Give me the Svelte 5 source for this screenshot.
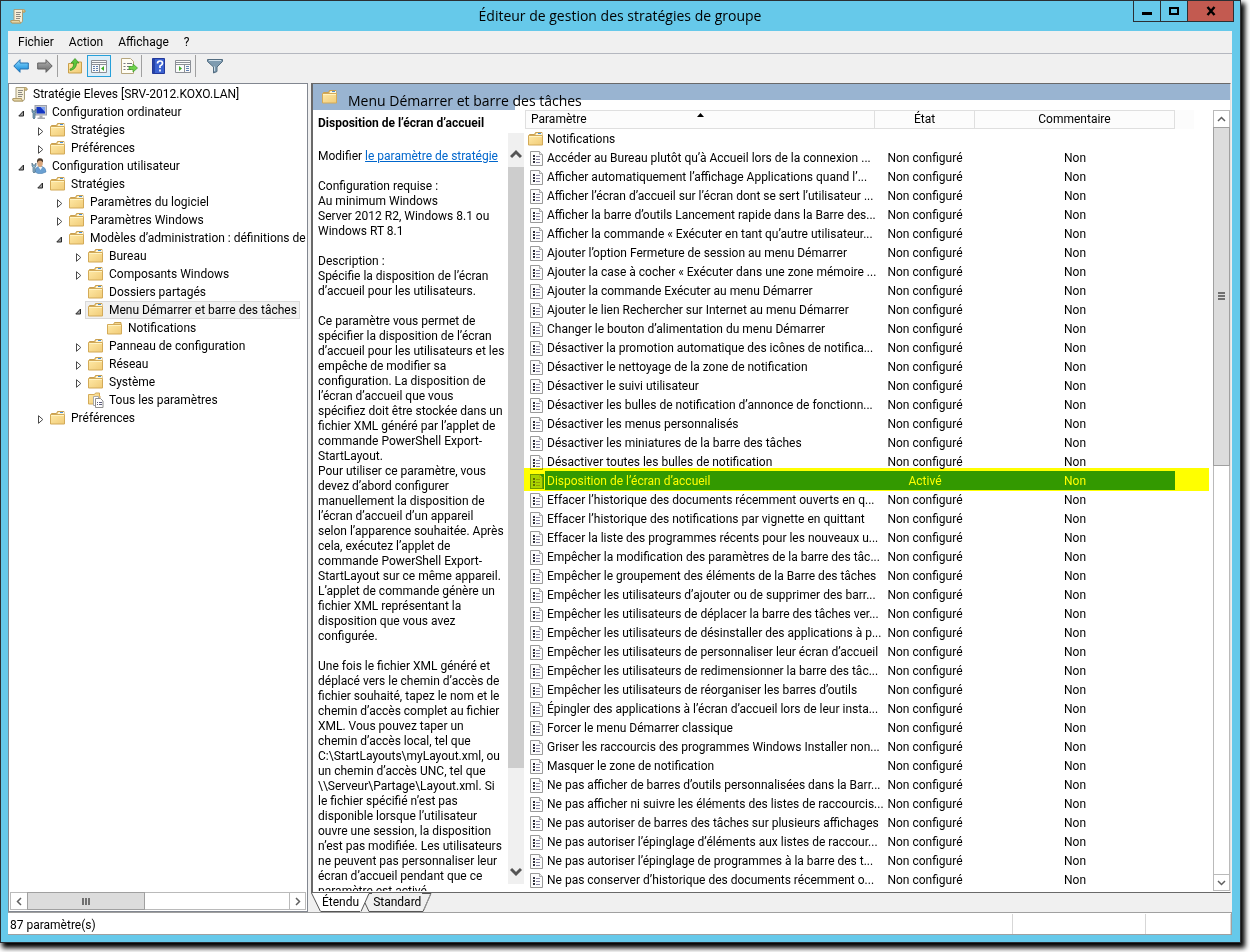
<script lang="ts">
  type Node = {
    label: string;
    depth: number;
    icon: "scroll" | "computer" | "user" | "folder" | "plain" | "all";
    open?: boolean;
    selected?: boolean;
  };

  const TREE: Node[] = [
    { label: "Stratégie Eleves [SRV-2012.KOXO.LAN]", depth: 0, icon: "scroll" },
    { label: "Configuration ordinateur", depth: 1, icon: "computer", open: true },
    { label: "Stratégies", depth: 2, icon: "folder", open: false },
    { label: "Préférences", depth: 2, icon: "folder", open: false },
    { label: "Configuration utilisateur", depth: 1, icon: "user", open: true },
    { label: "Stratégies", depth: 2, icon: "folder", open: true },
    { label: "Paramètres du logiciel", depth: 3, icon: "folder", open: false },
    { label: "Paramètres Windows", depth: 3, icon: "folder", open: false },
    { label: "Modèles d’administration : définitions de", depth: 3, icon: "folder", open: true },
    { label: "Bureau", depth: 4, icon: "folder", open: false },
    { label: "Composants Windows", depth: 4, icon: "folder", open: false },
    { label: "Dossiers partagés", depth: 4, icon: "folder" },
    { label: "Menu Démarrer et barre des tâches", depth: 4, icon: "folder", open: true, selected: true },
    { label: "Notifications", depth: 5, icon: "plain" },
    { label: "Panneau de configuration", depth: 4, icon: "folder", open: false },
    { label: "Réseau", depth: 4, icon: "folder", open: false },
    { label: "Système", depth: 4, icon: "folder", open: false },
    { label: "Tous les paramètres", depth: 4, icon: "all" },
    { label: "Préférences", depth: 2, icon: "folder", open: false },
  ];

  const SETTINGS = [
    "Accéder au Bureau plutôt qu’à Accueil lors de la connexion ...",
    "Afficher automatiquement l’affichage Applications quand l’...",
    "Afficher l’écran d’accueil sur l’écran dont se sert l’utilisateur ...",
    "Afficher la barre d’outils Lancement rapide dans la Barre des...",
    "Afficher la commande « Exécuter en tant qu’autre utilisateur...",
    "Ajouter l’option Fermeture de session au menu Démarrer",
    "Ajouter la case à cocher « Exécuter dans une zone mémoire ...",
    "Ajouter la commande Exécuter au menu Démarrer",
    "Ajouter le lien Rechercher sur Internet au menu Démarrer",
    "Changer le bouton d’alimentation du menu Démarrer",
    "Désactiver la promotion automatique des icônes de notifica...",
    "Désactiver le nettoyage de la zone de notification",
    "Désactiver le suivi utilisateur",
    "Désactiver les bulles de notification d’annonce de fonctionn...",
    "Désactiver les menus personnalisés",
    "Désactiver les miniatures de la barre des tâches",
    "Désactiver toutes les bulles de notification",
    "Disposition de l’écran d’accueil",
    "Effacer l’historique des documents récemment ouverts en q...",
    "Effacer l’historique des notifications par vignette en quittant",
    "Effacer la liste des programmes récents pour les nouveaux u...",
    "Empêcher la modification des paramètres de la barre des tâc...",
    "Empêcher le groupement des éléments de la Barre des tâches",
    "Empêcher les utilisateurs d’ajouter ou de supprimer des barr...",
    "Empêcher les utilisateurs de déplacer la barre des tâches ver...",
    "Empêcher les utilisateurs de désinstaller des applications à p...",
    "Empêcher les utilisateurs de personnaliser leur écran d’accueil",
    "Empêcher les utilisateurs de redimensionner la barre des tâc...",
    "Empêcher les utilisateurs de réorganiser les barres d’outils",
    "Épingler des applications à l’écran d’accueil lors de leur insta...",
    "Forcer le menu Démarrer classique",
    "Griser les raccourcis des programmes Windows Installer non...",
    "Masquer le zone de notification",
    "Ne pas afficher de barres d’outils personnalisées dans la Barr...",
    "Ne pas afficher ni suivre les éléments des listes de raccourcis...",
    "Ne pas autoriser de barres des tâches sur plusieurs affichages",
    "Ne pas autoriser l’épinglage d’éléments aux listes de raccour...",
    "Ne pas autoriser l’épinglage de programmes à la barre des t...",
    "Ne pas conserver d’historique des documents récemment o...",
  ];

  const REQUIREMENTS = `Configuration requise :
Au minimum Windows
Server 2012 R2, Windows 8.1 ou
Windows RT 8.1`;

  const DESCRIPTION = [
    `Description :
Spécifie la disposition de l’écran
d’accueil pour les utilisateurs.`,
    `Ce paramètre vous permet de
spécifier la disposition de l’écran
d’accueil pour les utilisateurs et les
empêche de modifier sa
configuration. La disposition de
l’écran d’accueil que vous
spécifiez doit être stockée dans un
fichier XML généré par l’applet de
commande PowerShell Export-
StartLayout.
Pour utiliser ce paramètre, vous
devez d’abord configurer
manuellement la disposition de
l’écran d’accueil d’un appareil
selon l’apparence souhaitée. Après
cela, exécutez l’applet de
commande PowerShell Export-
StartLayout sur ce même appareil.
L’applet de commande génère un
fichier XML représentant la
disposition que vous avez
configurée.`,
    `Une fois le fichier XML généré et
déplacé vers le chemin d’accès de
fichier souhaité, tapez le nom et le
chemin d’accès complet au fichier
XML. Vous pouvez taper un
chemin d’accès local, tel que
C:\\StartLayouts\\myLayout.xml, ou
un chemin d’accès UNC, tel que
\\\\Serveur\\Partage\\Layout.xml. Si
le fichier spécifié n’est pas
disponible lorsque l’utilisateur
ouvre une session, la disposition
n’est pas modifiée. Les utilisateurs
ne peuvent pas personnaliser leur
écran d’accueil pendant que ce
paramètre est activé.`,
  ];

  let selected = $state("Disposition de l’écran d’accueil");
</script>

{#snippet folder()}
  <svg width="16" height="16" viewBox="0 0 16 16" aria-hidden="true">
    <path d="M1.500 3.500h5l1-2h6.500v3h-12.500z" fill="#e9c46f" stroke="#c9a050" />
    <path d="M8.500 2h5.500v2H7.500z" fill="#fff6d8" />
    <rect x="10" y="2" width="3" height="1" fill="#4a90d8" />
    <path d="M.5 4.500h14v9.500H.5z" fill="url(#folder-fill)" stroke="#d3aa58" />
    <path d="M1 5.500h13" stroke="#fff3c2" />
  </svg>
{/snippet}

{#snippet plainFolder()}
  <svg width="16" height="16" viewBox="0 0 16 16" aria-hidden="true">
    <path d="M1.500 4.500h5l1-2h6.500v2h-12.500z" fill="#f4d78e" stroke="#c9a050" />
    <path d="M.5 4.500h14v9.500H.5z" fill="url(#folder-fill)" stroke="#d3aa58" />
    <path d="M1 5.500h13" stroke="#fff3c2" />
  </svg>
{/snippet}

{#snippet scroll()}
  <svg width="16" height="16" viewBox="0 0 16 16" aria-hidden="true">
    <path d="M4 1.500h9.500q2 .5 1.500 2.500h-2.500v9q-.5 2-2 2h-9q-1.500-1-.5-2.500h3z" fill="#f6efd8" stroke="#a99f7c" />
    <path d="M12.500 4q-.5-2 1-2.500q2 .5 1.500 2.500z" fill="#d9c58d" stroke="#b89f62" />
    <path d="M1 12.500h8.500q0 2 1.500 2.500H2q-1.500-1-1-2.500z" fill="#e5d7a8" stroke="#b39d68" />
    <path d="M6 4.500h5M6 6.500h4M6 8.500h5M6 10.500h4" stroke="#8d8b83" />
  </svg>
{/snippet}

{#snippet computer()}
  <svg width="16" height="16" viewBox="0 0 16 16" aria-hidden="true">
    <rect x="4" y="1.500" width="11.500" height="9.500" fill="#c3c7cf" stroke="#9a9faa" />
    <rect x="5.500" y="3" width="8.500" height="6.500" fill="#1336c4" />
    <path d="M9.500 3H14v5z" fill="#7fa2f2" />
    <path d="M8.500 11.500h3v2h2.500v1.500H6.500v-1.500h2z" fill="#a7aab0" />
    <path d="M1 5v3l1 1.200v4.800l1 1 1-1V9.200L5 8V5L4 7H2z" fill="#7fa3ba" stroke="#48697f" stroke-width=".7" />
  </svg>
{/snippet}

{#snippet user()}
  <svg width="16" height="16" viewBox="0 0 16 16" aria-hidden="true">
    <path d="M4 14q0-5 4-5.500h3q4 1 4 5.500l-4 1.500H7z" fill="#6aa0d2" stroke="#4a7fb0" stroke-width=".6" />
    <path d="M7.500 9l2 3 2-3z" fill="#f1f5f8" />
    <ellipse cx="9" cy="5" rx="2.800" ry="4" fill="#d9a67c" />
    <path d="M6 5q-.5-5 3-4.700 3.500 0 3 4.200-1.500-2-3-2-2 0-3 2.500z" fill="#4b3a2c" />
    <path d="M1 5v3l1 1.200v4.800l1 1 1-1V9.200L5 8V5L4 7H2z" fill="#8fb6cc" stroke="#48697f" stroke-width=".7" />
  </svg>
{/snippet}

{#snippet allSettings()}
  <svg width="16" height="16" viewBox="0 0 16 16" aria-hidden="true">
    <path d="M.5 2.500h6l1-1.500h4v3h.5v8H.5z" fill="url(#folder-fill)" stroke="#d3aa58" />
    <path d="M5.500 4.500h5v9h-5z" fill="#fff" stroke="#aaa" />
    <path d="M7.500 6.500h5l2.500 2.500v6.500H7.500z" fill="#fff" stroke="#8e8e8e" />
    <path d="M9 10.500h1M11 10.500h3M9 12.500h1M11 12.500h3" stroke="#5b5b7a" />
  </svg>
{/snippet}

{#snippet policy()}
  <svg width="14" height="15" viewBox="0 0 14 15" aria-hidden="true">
    <path d="M.5.500h9L12.500 3.500v11H.5z" fill="#fcfcfc" stroke="#999" />
    <path d="M9.500.500v3H12.500" fill="#e8e8e8" stroke="#aaa" />
    <path d="M3 5h2M3 8h2M3 11h2" stroke="#2d2d3a" stroke-width="2" />
    <path d="M6 5.500h4M6 8.500h4M6 11.500h4" stroke="#8581a0" />
  </svg>
{/snippet}

{#snippet chevron(d: string)}
  <svg width="9" height="9" viewBox="0 0 9 9" aria-hidden="true">
    <path {d} fill="none" stroke="#606060" stroke-width="1.500" />
  </svg>
{/snippet}

<svg class="defs" width="0" height="0" aria-hidden="true">
  <defs>
    <linearGradient id="folder-fill" x1="0" y1="0" x2="1" y2="1">
      <stop offset="0" stop-color="#ffe9a6" />
      <stop offset="1" stop-color="#f0cb77" />
    </linearGradient>
    <linearGradient id="back-fill" x1="0" y1="0" x2="0" y2="1">
      <stop offset="0" stop-color="#8fdcff" />
      <stop offset="1" stop-color="#0a84d8" />
    </linearGradient>
    <linearGradient id="fwd-fill" x1="0" y1="0" x2="0" y2="1">
      <stop offset="0" stop-color="#b5b5b5" />
      <stop offset="1" stop-color="#686868" />
    </linearGradient>
  </defs>
</svg>

<div class="desktop">
  <main class="window">
    <header class="titlebar">
      <span class="app-icon">{@render scroll()}</span>
      <h1>Éditeur de gestion des stratégies de groupe</h1>
      <div class="caption-buttons">
        <button type="button" aria-label="Réduire">
          <svg width="10" height="10" viewBox="0 0 10 10"><path d="M0 7.500h10" stroke="#000" stroke-width="3" /></svg>
        </button>
        <button type="button" aria-label="Agrandir">
          <svg width="10" height="10" viewBox="0 0 10 10"><rect x="1" y="2" width="8" height="6" fill="none" stroke="#000" stroke-width="2" /></svg>
        </button>
        <button type="button" class="close" aria-label="Fermer">
          <svg width="10" height="10" viewBox="0 0 10 10"><path d="M1.500 1l7 8M8.500 1l-7 8" stroke="#000" stroke-width="2.400" /></svg>
        </button>
      </div>
    </header>

    <nav class="menubar">
      <button type="button">Fichier</button>
      <button type="button">Action</button>
      <button type="button">Affichage</button>
      <button type="button">?</button>
    </nav>

    <div class="toolbar" role="toolbar" aria-label="Outils">
      <button type="button" aria-label="Précédent">
        <svg width="16" height="14" viewBox="0 0 16 14"><path d="M.8 7L7 .700v3.300h8.300v6H7v3.300z" fill="url(#back-fill)" stroke="#2570b0" /></svg>
      </button>
      <button type="button" aria-label="Suivant">
        <svg width="16" height="14" viewBox="0 0 16 14"><path d="M15.200 7L9 .700v3.300H.7v6H9v3.300z" fill="url(#fwd-fill)" stroke="#606060" /></svg>
      </button>
      <span class="sep"></span>
      <button type="button" aria-label="Dossier parent">
        <svg width="16" height="16" viewBox="0 0 16 16">
          <path d="M1.500 5.500h5l1-1.500h7v11h-13z" fill="url(#folder-fill)" stroke="#c99f4a" />
          <path d="M3 11q4-1 3.500-6H4l4-4.500L12 5H9.500q0 6-6 7.500z" fill="#5cc63c" stroke="#348a1e" stroke-width=".7" />
        </svg>
      </button>
      <button type="button" class="active" aria-label="Arborescence">
        <svg width="17" height="15" viewBox="0 0 17 15">
          <path d="M.5 1.500h15v12H.5z" fill="#fafafa" stroke="#8b8f96" />
          <path d="M1 3.500h14M1 5.500h14M8.500 6v7" stroke="#8b8f96" />
          <path d="M2 7.500h2M5 7.500h2M2 9.500h2M5 9.500h2M2 11.500h2M5 11.500h2" stroke="#5f7fae" />
          <path d="M13 7v5L10 9.500z" fill="#3cae26" />
        </svg>
      </button>
      <button type="button" class="spaced" aria-label="Exporter la liste">
        <svg width="17" height="16" viewBox="0 0 17 16">
          <path d="M.5.500h9l3 3v12H.5z" fill="#fffdf3" stroke="#b6a67e" />
          <path d="M2.500 5.500h2M6 5.500h5M2.500 8.500h2M6 8.500h4M2.500 11.500h2M6 11.500h4" stroke="#77787e" />
          <path d="M8 8.500h4V6l4.500 4-4.500 4v-2.500H8z" fill="#6fd34b" stroke="#3d9a25" stroke-width=".7" />
        </svg>
      </button>
      <span class="sep"></span>
      <button type="button" aria-label="Aide">
        <svg width="14" height="16" viewBox="0 0 14 16">
          <path d="M.5.500h12v15H.5z" fill="#3a61d0" stroke="#23389a" />
          <path d="M1 1h2v14H1z" fill="#2543a6" />
          <path d="M5.500 5.500q0-2.500 2.500-2.500t2.500 2.200Q10.500 7 8 8v2M8 11.500v2" fill="none" stroke="#fff" stroke-width="1.700" />
        </svg>
      </button>
      <button type="button" aria-label="Volet d’actions">
        <svg width="17" height="15" viewBox="0 0 17 15">
          <path d="M.5 1.500h15v12H.5z" fill="#fafafa" stroke="#8b8f96" />
          <path d="M1 3.500h14M1 5.500h14M9.500 6v7" stroke="#8b8f96" />
          <path d="M11 7.500h3M11 9.500h3M11 11.500h3" stroke="#5f7fae" />
          <path d="M4 7v5l3-2.500z" fill="#3cae26" />
        </svg>
      </button>
      <span class="sep"></span>
      <button type="button" class="filter" aria-label="Filtrer">
        <svg width="16" height="16" viewBox="0 0 16 16">
          <path d="M.5 1.500h15v2L10 9v4.500L6.500 15V9L.5 3.500z" fill="#7e9bb0" stroke="#526c80" />
          <path d="M2 2.500h12" stroke="#cfdee8" />
          <path d="M7.500 8.500V13" stroke="#c6d8e3" />
        </svg>
      </button>
    </div>

    <div class="panes">
      <section class="tree-pane">
        <ul class="tree" role="tree" aria-label="Arborescence de la console">
          {#each TREE as node}
            <li role="treeitem" aria-selected={node.selected ?? false} style:padding-left="{node.depth * 19}px">
              {#if node.depth > 0}
                <span class="toggle">
                  {#if node.open === true}
                    <svg width="7" height="7" viewBox="0 0 7 7"><path d="M5.500 1v5H.8z" fill="#a0a0a0" stroke="#262626" /></svg>
                  {:else if node.open === false}
                    <svg width="6" height="9" viewBox="0 0 6 9"><path d="M.5.700v7.600L4.800 4.500z" fill="#fff" stroke="#4a4a4a" /></svg>
                  {/if}
                </span>
              {/if}
              <span class="node" class:selected={node.selected}>
                {#if node.icon === "scroll"}{@render scroll()}
                {:else if node.icon === "computer"}{@render computer()}
                {:else if node.icon === "user"}{@render user()}
                {:else if node.icon === "all"}{@render allSettings()}
                {:else if node.icon === "plain"}{@render plainFolder()}
                {:else}{@render folder()}
                {/if}
                <span>{node.label}</span>
              </span>
            </li>
          {/each}
        </ul>
        <div class="hscroll">
          <button type="button" aria-label="Défiler à gauche">{@render chevron("M6 1L2.500 4.500L6 8")}</button>
          <span class="hthumb"><i></i><i></i><i></i></span>
          <button type="button" class="end" aria-label="Défiler à droite">{@render chevron("M3 1l3.500 3.500L3 8")}</button>
        </div>
      </section>

      <section class="result-pane">
        <div class="result-view">
          <div class="banner">
            <h2>{@render folder()}<span>Menu Démarrer et barre des tâches</span></h2>
          </div>
          <div class="result-body">
            <article class="details">
              <h3>{selected}</h3>
              <div class="details-scroll">
                <div class="details-text">
                  <p>Modifier <a href="#policy">le paramètre de stratégie</a></p>
                  <p>{REQUIREMENTS}</p>
                  {#each DESCRIPTION as paragraph}
                    <p>{paragraph}</p>
                  {/each}
                </div>
                <div class="vscroll flat">
                  <button type="button" aria-label="Défiler vers le haut">
                    <svg width="12" height="10" viewBox="0 0 12 10"><path d="M1 8l5-5 5 5" fill="none" stroke="#555" stroke-width="3" /></svg>
                  </button>
                  <span class="vthumb"></span>
                  <button type="button" class="end" aria-label="Défiler vers le bas">
                    <svg width="12" height="10" viewBox="0 0 12 10"><path d="M1 2l5 5 5-5" fill="none" stroke="#555" stroke-width="3" /></svg>
                  </button>
                </div>
              </div>
            </article>

            <div class="list">
              <div class="list-scroll">
                <table>
                  <colgroup>
                    <col class="col-name" />
                    <col class="col-state" />
                    <col class="col-comment" />
                    <col />
                  </colgroup>
                  <thead>
                    <tr>
                      <th class="name" aria-sort="ascending">
                        Paramètre
                        <svg class="sort" width="7" height="4" viewBox="0 0 7 4"><path d="M0 4h7L3.500 0z" /></svg>
                      </th>
                      <th>État</th>
                      <th>Commentaire</th>
                      <td></td>
                    </tr>
                  </thead>
                  <tbody>
                    <tr>
                      <td class="name"><span class="row-icon">{@render folder()}</span><span class="text">Notifications</span></td>
                      <td></td>
                      <td></td>
                      <td></td>
                    </tr>
                    {#each SETTINGS as setting}
                      <tr class:selected={setting === selected} onclick={() => (selected = setting)}>
                        <td class="name"><span class="row-icon">{@render policy()}</span><span class="text">{setting}</span></td>
                        <td>{setting.startsWith("Disposition") ? "Activé" : "Non configuré"}</td>
                        <td>Non</td>
                        <td></td>
                      </tr>
                    {/each}
                  </tbody>
                </table>
              </div>
              <div class="vscroll">
                <button type="button" aria-label="Défiler vers le haut">{@render chevron("M1 6l3.500-3.500L8 6")}</button>
                <span class="vthumb"><i></i><i></i><i></i></span>
                <button type="button" class="end" aria-label="Défiler vers le bas">{@render chevron("M1 3l3.500 3.500L8 3")}</button>
              </div>
            </div>
          </div>
        </div>
        <div class="tabs" role="tablist">
          <svg width="10" height="19" viewBox="0 0 10 19"><path d="M0 0h10v18.500H9.500z" fill="#fff" /><path d="M.5 0l9 18.500" stroke="#555" /></svg>
          <button type="button" role="tab" class="current" aria-selected="true">Étendu</button>
          <svg width="12" height="19" viewBox="0 0 12 19"><path d="M0 0h9L1 18.500H0z" fill="#fff" /><path d="M9 .500L1 18.500M5 10l4 8.500M9 .500h3M9 18.500h3" stroke="#555" fill="none" /></svg>
          <button type="button" role="tab" aria-selected="false">Standard</button>
          <svg width="10" height="19" viewBox="0 0 10 19"><path d="M0 .500h9L1 18.500H0" stroke="#555" fill="none" /><path d="M8.500 1L2 17" stroke="#999" fill="none" /></svg>
        </div>
      </section>
    </div>

    <footer class="status">
      <span class="count">87 paramètre(s)</span>
      <span class="cell"></span>
      <span class="cell small"></span>
    </footer>
  </main>
</div>

<style>
  :global(body) {
    margin: 0;
    background: #fff;
  }
  .defs {
    position: absolute;
  }
  .desktop {
    box-sizing: border-box;
    height: 100vh;
    padding: 0 9px 9px 0;
    overflow: hidden;
    font-family: "Segoe UI", Roboto, "Open Sans", sans-serif;
    font-size: 12px;
    color: #000;
  }
  button {
    font: inherit;
    color: inherit;
    padding: 0;
    margin: 0;
    border: 0;
    background: none;
  }
  svg {
    display: block;
    flex: none;
  }
  .window {
    box-sizing: border-box;
    height: 100%;
    display: flex;
    flex-direction: column;
    padding: 0 8px 7px 7px;
    border: 1px solid #2b2f33;
    background: #66c9ea;
    box-shadow: 3px 4px 5px 1px #000;
  }
  .titlebar {
    position: relative;
    display: flex;
    justify-content: center;
    align-items: center;
    height: 30px;
    flex: none;
  }
  .titlebar h1 {
    margin: 0 0 2px;
    font-family: "Segoe UI", "Open Sans", sans-serif;
    font-size: 14px;
    font-weight: 400;
  }
  .app-icon {
    position: absolute;
    left: 2px;
    top: 7px;
  }
  .caption-buttons {
    position: absolute;
    top: -1px;
    right: -2px;
    display: flex;
  }
  .caption-buttons button {
    display: grid;
    place-items: center;
    box-sizing: border-box;
    width: 28px;
    height: 22px;
    border: 1px solid #2b2f33;
    margin-left: -1px;
  }
  .caption-buttons .close {
    width: 47px;
    background: #c35a50;
  }
  .menubar {
    display: flex;
    gap: 15px;
    height: 22px;
    flex: none;
    padding: 0 10px;
    background: #f0f0f0;
    border-bottom: 1px solid #b4b7bf;
  }
  .toolbar {
    display: flex;
    align-items: center;
    flex: none;
    height: 24px;
    padding: 0 1px 5px;
    background: #f0f0f0;
  }
  .toolbar button {
    display: grid;
    place-items: center;
    box-sizing: border-box;
    width: 24px;
    height: 22px;
  }
  .toolbar .active {
    border: 1px solid #26a0da;
    background: #dcedf8;
  }
  .toolbar .spaced {
    margin-left: 6px;
  }
  .toolbar .filter {
    margin-left: 2px;
  }
  .sep {
    width: 1px;
    height: 22px;
    margin-right: 5px;
    background: #a0a0a0;
  }
  .panes {
    display: flex;
    gap: 3px;
    flex: 1;
    min-height: 0;
    background: #f0f0f0;
  }
  .tree-pane {
    box-sizing: border-box;
    width: 300px;
    flex: none;
    display: flex;
    flex-direction: column;
    border: 1px solid #828790;
    background: #fff;
  }
  .tree {
    flex: 1;
    min-height: 0;
    margin: 0;
    padding: 1px 0 0;
    list-style: none;
    overflow: hidden;
  }
  .tree li {
    display: flex;
    align-items: center;
    height: 18px;
    white-space: nowrap;
  }
  .toggle {
    display: flex;
    justify-content: center;
    flex: none;
    width: 13px;
    margin-left: -13px;
    padding-top: 3px;
  }
  .node {
    display: flex;
    align-items: center;
    gap: 5px;
    flex: none;
    box-sizing: border-box;
    height: 18px;
    padding: 0 2px;
    border: 1px solid transparent;
  }
  .node.selected {
    background: #f0f0f0;
    border-color: #d9d9d9;
  }
  .hscroll {
    display: flex;
    height: 16px;
    margin: 0 1px 1px;
    border: 1px solid #bababa;
  }
  .hscroll button {
    display: grid;
    place-items: center;
    width: 16px;
  }
  .hscroll .end {
    margin-left: auto;
    border-left: 1px solid #bababa;
  }
  .hthumb {
    display: flex;
    justify-content: center;
    align-items: center;
    gap: 1px;
    box-sizing: border-box;
    width: 40%;
    margin: -1px 0;
    border: 1px solid #a0a0a0;
    background: #dcdcdc;
  }
  .hthumb i {
    width: 2px;
    height: 7px;
    background: #707070;
  }
  .result-pane {
    flex: 1;
    min-width: 0;
    display: flex;
    flex-direction: column;
  }
  .result-view {
    flex: 1;
    min-height: 0;
    display: flex;
    flex-direction: column;
    background: #fff;
    border: solid #696969;
    border-width: 1px 1px 1px 2px;
    border-right-color: #e3e3e3;
    margin-right: 1px;
  }
  .banner {
    position: relative;
    z-index: 1;
    height: 16px;
    flex: none;
    background: #99b4d1;
  }
  .banner h2 {
    display: flex;
    align-items: center;
    gap: 10px;
    width: 193px;
    height: 26px;
    margin: 0;
    padding-left: 9px;
    background: #99b4d1;
    font-family: "Segoe UI", "Open Sans", sans-serif;
    font-size: 14px;
    font-weight: 400;
    white-space: nowrap;
  }
  .banner h2 span {
    padding-top: 6px;
  }
  .result-body {
    flex: 1;
    min-height: 0;
    display: flex;
    padding-top: 10px;
  }
  .details {
    display: flex;
    flex-direction: column;
    width: 211px;
    flex: none;
  }
  .details h3 {
    margin: 0;
    padding: 6px 5px 2px;
    font-size: 12px;
    line-height: 15px;
    white-space: nowrap;
  }
  .details-scroll {
    display: flex;
    flex: 1;
    min-height: 0;
  }
  .details-text {
    flex: 1;
    min-width: 0;
    margin: 16px 0 1px;
    padding-left: 5px;
    overflow: hidden;
    line-height: 15px;
  }
  .details-text p {
    margin: 0 0 15px;
    white-space: pre;
  }
  .details-text a {
    color: #0066cc;
  }
  .vscroll {
    display: flex;
    flex-direction: column;
    box-sizing: border-box;
    width: 17px;
    flex: none;
    border: 1px solid #bababa;
  }
  .vscroll button {
    display: grid;
    place-items: center;
    height: 16px;
    flex: none;
  }
  .vscroll .end {
    margin-top: auto;
    border-top: 1px solid #bababa;
  }
  .vthumb {
    display: flex;
    flex-direction: column;
    justify-content: center;
    align-items: center;
    gap: 1px;
    box-sizing: border-box;
    height: 43.5%;
    margin: 0 -1px;
    border: 1px solid #a0a0a0;
    background: #dcdcdc;
  }
  .vthumb i {
    width: 7px;
    height: 2px;
    background: #707070;
  }
  .vscroll.flat {
    width: 16px;
    margin-bottom: 8px;
    border: 0;
    background: #f0f0f0;
  }
  .vscroll.flat button {
    height: 34px;
    padding-top: 8px;
    box-sizing: border-box;
  }
  .vscroll.flat .end {
    height: 24px;
    padding-top: 0;
    border: 0;
  }
  .vscroll.flat .vthumb {
    height: 80%;
    margin: 0;
    border: 0;
    background: #cdcdcd;
  }
  .list {
    display: flex;
    flex: 1;
    min-width: 0;
    margin: 0 0 1px 1px;
  }
  .list-scroll {
    flex: 1;
    min-width: 0;
    margin-left: -1px;
    padding-left: 1px;
    overflow: hidden;
  }
  table {
    width: 100%;
    table-layout: fixed;
    border-collapse: separate;
    border-spacing: 0;
  }
  .col-name {
    width: 350px;
  }
  .col-state {
    width: 100px;
  }
  .col-comment {
    width: 200px;
  }
  th,
  td {
    box-sizing: border-box;
    height: 19px;
    padding: 0;
    font-weight: 400;
    text-align: center;
    line-height: 17px;
    white-space: nowrap;
  }
  thead th,
  thead td {
    position: relative;
    background: #fcfcfc;
  }
  thead th {
    border: solid #dfdfdf;
    border-width: 1px 1px 1px 0;
  }
  th.name {
    padding-left: 5px;
    border-left-width: 1px;
    text-align: left;
  }
  .sort {
    position: absolute;
    left: 49%;
    top: 2px;
  }
  tbody td {
    padding-top: 2px;
  }
  td.name {
    display: flex;
    align-items: center;
    padding-top: 0;
    text-align: left;
  }
  .row-icon {
    display: flex;
    justify-content: flex-end;
    box-sizing: border-box;
    width: 20px;
    padding: 1px 1px 0 0;
  }
  .text {
    flex: 1;
    min-width: 0;
    height: 19px;
    padding-left: 2px;
    line-height: 21px;
  }
  tr.selected {
    position: relative;
    color: #fff;
  }
  tr.selected td:not(:last-child):not(.name),
  tr.selected .text {
    background: #3399ff;
  }
  tr.selected .row-icon :global(svg) {
    background: #3399ff;
  }
  tr.selected .row-icon :global(path) {
    opacity: 0.6;
  }
  /* highlighter stroke over the selected row */
  tr.selected::after {
    content: "";
    position: absolute;
    inset: -3px 4px -1px -1px;
    background: #ff0;
    mix-blend-mode: multiply;
    pointer-events: none;
  }
  .tabs {
    display: flex;
    height: 19px;
    flex: none;
    background: #f0f0f0;
  }
  .tabs button {
    box-sizing: border-box;
    padding: 0 1px;
    line-height: 18px;
    border-bottom: 1px solid #555;
  }
  .tabs .current {
    background: #fff;
  }
  .status {
    display: flex;
    height: 21px;
    flex: none;
    border: solid #a0a0a0;
    border-width: 1px 1px 1px 0;
    background: #fff;
  }
  .count {
    flex: 1;
    padding-left: 2px;
    line-height: 24px;
  }
  .cell {
    width: 132px;
    margin-top: 1px;
    border-left: 1px solid #d7d7d7;
  }
  .cell.small {
    width: 84px;
    border-right: 1px solid #d7d7d7;
  }
</style>
